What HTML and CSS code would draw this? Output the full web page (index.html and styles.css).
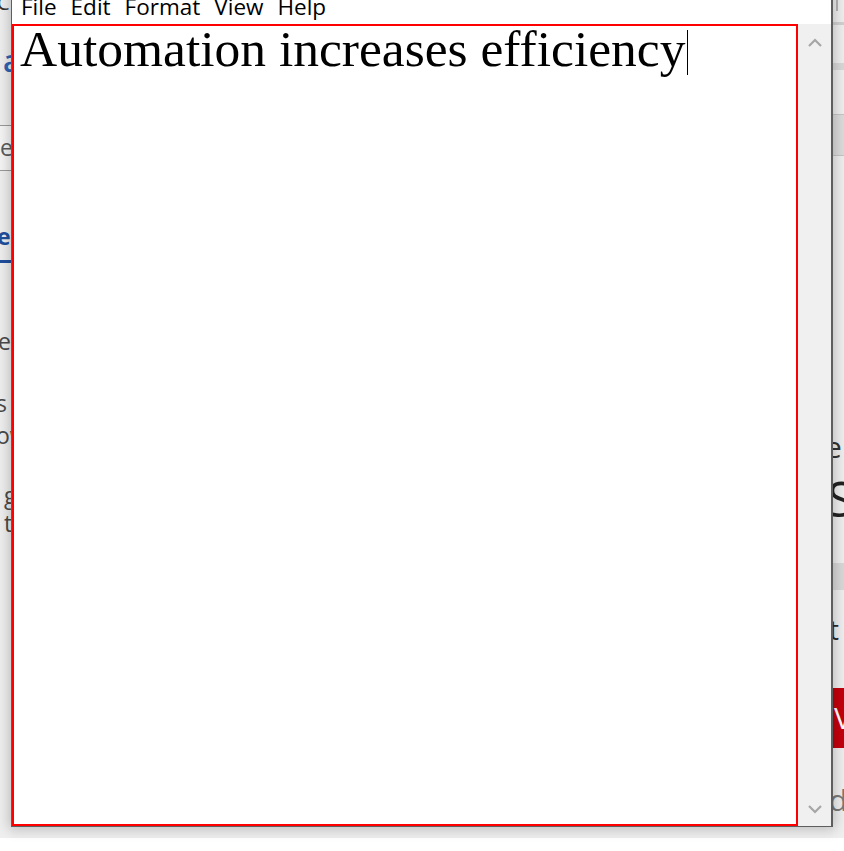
FILE: index.html
```html
<!DOCTYPE html>
<html>
<head>
<meta charset="utf-8">
<title>Notepad</title>
<link rel="stylesheet" href="styles.css">
</head>
<body>
<div class="desktop">
  <div class="bgpage">
    <div class="bg-left">
      <div class="bl-top">C</div>
      <div class="bl-logo"><span class="bl-logo-bar"></span><span class="bl-logo-a">a</span></div>
      <div class="bl-input">e</div>
      <div class="bl-tab">ea</div>
      <div class="bl-tab-line"></div>
      <div class="bl-p1">ea</div>
      <div class="bl-p2">s<br>ow</div>
      <div class="bl-p3">g<br>t</div>
    </div>
    <div class="bg-right">
      <div class="br-thumb"></div>
      <div class="br-line"></div>
      <div class="br-band1"></div>
      <div class="br-band2"></div>
      <div class="br-head1">e</div>
      <div class="br-head2">S</div>
      <div class="br-band3"></div>
      <div class="br-text">t</div>
      <div class="br-btn">V</div>
      <div class="br-d">d</div>
    </div>
  </div>

  <div class="notepad">
    <div class="menubar">
      <span class="menu-item">File</span>
      <span class="menu-item">Edit</span>
      <span class="menu-item">Format</span>
      <span class="menu-item">View</span>
      <span class="menu-item">Help</span>
    </div>
    <div class="client">
      <div class="editor"><span class="doc-text">Automation increases efficiency</span><span class="caret"></span></div>
      <div class="vscroll">
        <svg class="arrow" width="14" height="9" viewBox="0 0 14 9"><path d="M1 8 L7 2 L13 8" fill="none" stroke="#a6a6a6" stroke-width="2.2"/></svg>
        <svg class="arrow" width="14" height="9" viewBox="0 0 14 9"><path d="M1 1 L7 7 L13 1" fill="none" stroke="#a6a6a6" stroke-width="2.2"/></svg>
      </div>
    </div>
  </div>
</div>
</body>
</html>
```

FILE: styles.css
```css
html, body {
  margin: 0;
  padding: 0;
}
body {
  width: 844px;
  height: 851px;
  overflow: hidden;
  background: #ffffff;
  font-family: "Open Sans", "Noto Sans", sans-serif;
}
.desktop {
  position: relative;
  width: 844px;
  height: 851px;
}
.bgpage {
  display: flex;
  justify-content: space-between;
  height: 838px;
  background: #eeeeee;
}
.bg-left {
  width: 11px;
  height: 838px;
  overflow: hidden;
  background: #efefef;
  display: flex;
  flex-direction: column;
  font-family: "Open Sans", sans-serif;
  font-size: 23px;
  color: #4a4a4a;
}
.bl-top {
  height: 40px;
  line-height: 14px;
  margin-top: -4px;
  color: #333;
  font-size: 20px;
  margin-left: -3px;
}
.bl-logo {
  height: 77px;
  display: flex;
  align-items: flex-start;
  margin-top: 12px;
}
.bl-logo-bar {
  width: 2px;
  height: 26px;
  background: #9fd0f0;
  margin-right: 3px;
}
.bl-logo-a {
  color: #2f64b4;
  font-size: 30px;
  line-height: 26px;
  font-weight: 600;
}
.bl-input {
  height: 44px;
  border-top: 1px solid #9a9a9a;
  border-bottom: 1px solid #9a9a9a;
  background: #f5f5f5;
  line-height: 42px;
  color: #5a5a5a;
  margin-left: -2px;
  padding-left: 2px;
}
.bl-tab {
  margin-top: 49px;
  height: 40px;
  line-height: 32px;
  font-weight: 700;
  color: #1f4f9e;
  margin-left: -3px;
}
.bl-tab-line {
  height: 3px;
  background: #1f4f9e;
}
.bl-p1 {
  margin-top: 62px;
  line-height: 32px;
  margin-left: -2px;
}
.bl-p2 {
  margin-top: 30px;
  line-height: 32px;
  margin-left: -4px;
}
.bl-p3 {
  margin-top: 30px;
  line-height: 28px;
  margin-left: 4px;
}
.bg-right {
  width: 11px;
  height: 838px;
  overflow: hidden;
  background: #efefef;
  display: flex;
  flex-direction: column;
  font-family: "Open Sans", sans-serif;
  color: #222;
}
.br-thumb {
  width: 2px;
  height: 11px;
  margin-left: 3px;
  background: #b5b5b5;
}
.br-line {
  height: 3px;
  margin-top: 11px;
  background: #d2d2d2;
}
.br-band1 {
  height: 7px;
  margin-top: 38px;
  background: #d9d9d9;
}
.br-band2 {
  height: 40px;
  margin-top: 44px;
  background: #dcdcdc;
  border-top: 1px solid #c6c6c6;
  border-bottom: 1px solid #c6c6c6;
}
.br-head1 {
  margin-top: 276px;
  font-size: 30px;
  line-height: 30px;
  margin-left: -8px;
  color: #333;
}
.br-head2 {
  margin-top: 11px;
  font-size: 50px;
  line-height: 50px;
  margin-left: -6px;
  color: #222;
}
.br-band3 {
  height: 27px;
  margin-top: 40px;
  background: #d9d9d9;
}
.br-text {
  margin-top: 19px;
  font-size: 28px;
  line-height: 40px;
  margin-left: -4px;
  color: #2a2a2a;
}
.br-btn {
  margin-top: 39px;
  height: 60px;
  background: #c4000c;
  color: #fff;
  font-size: 30px;
  line-height: 60px;
  padding-left: 1px;
}
.br-d {
  margin-top: 37px;
  font-size: 30px;
  line-height: 30px;
  color: #7a7a7a;
  margin-left: -4px;
}

/* Notepad window */
.notepad {
  position: absolute;
  left: 11px;
  top: -9px;
  width: 819px;
  border: 1px solid #5e5e5e;
  border-right-width: 2px;
  border-top: none;
  background: #ffffff;
  box-shadow: 0 0 12px 2px rgba(0, 0, 0, 0.22);
  display: flex;
  flex-direction: column;
}
.menubar {
  height: 33px;
  display: flex;
  align-items: flex-start;
  padding-left: 8px;
  background: #ffffff;
  font-family: "Open Sans", "Noto Sans", sans-serif;
  font-size: 22.5px;
  line-height: 32px;
  color: #000;
}
.menu-item {
  padding: 0 7px 0 1px;
  margin-right: 6px;
}
.client {
  display: flex;
  height: 802px;
}
.editor {
  flex: 1;
  border: 2px solid #ff0000;
  background: #ffffff;
  padding: 3px 6px 0 6px;
  font-family: "Liberation Serif", "Times New Roman", serif;
  font-size: 51.5px;
  line-height: 40px;
  color: #000;
  white-space: nowrap;
  overflow: hidden;
}
.caret {
  display: inline-block;
  width: 1px;
  height: 45px;
  background: #000;
  margin-left: 2px;
  vertical-align: -9px;
}
.vscroll {
  width: 33px;
  background: #f0f0f0;
  display: flex;
  flex-direction: column;
  justify-content: space-between;
  align-items: center;
  padding: 14px 0 12px;
  box-sizing: border-box;
}
.arrow {
  display: block;
}
```
